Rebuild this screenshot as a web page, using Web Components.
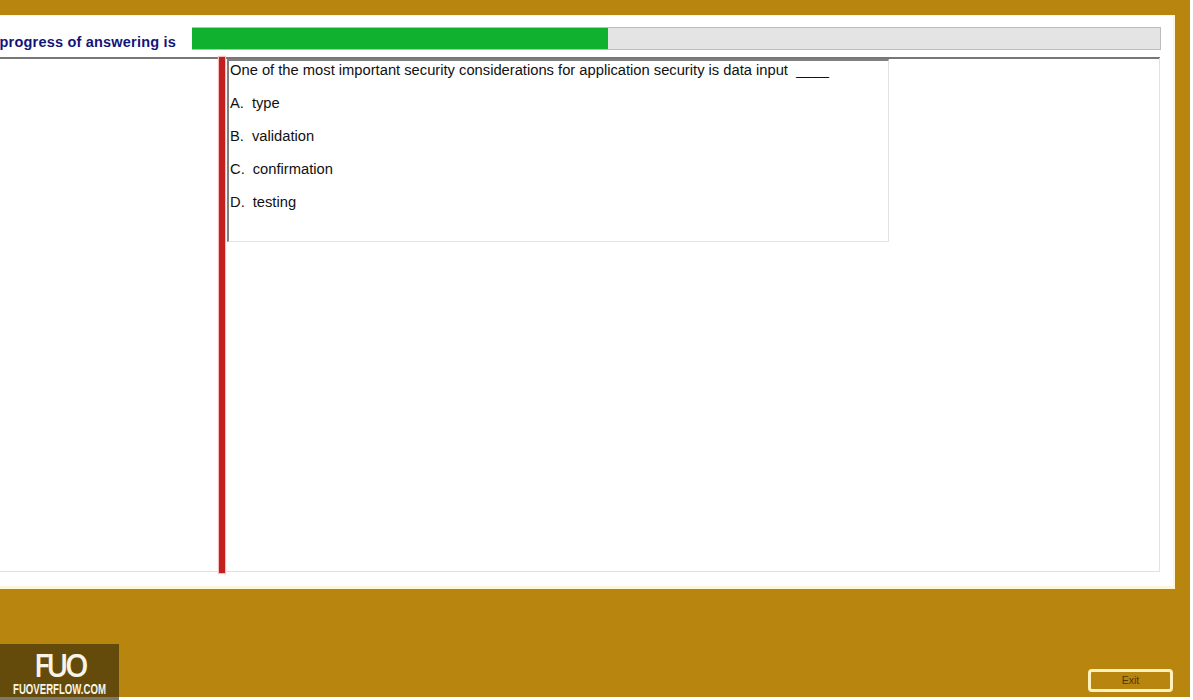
<!DOCTYPE html>
<html>
<head>
<meta charset="utf-8">
<title>Exam</title>
<style>
    html, body { margin: 0; height: 100%; background: #fff; overflow: hidden; }
    body { font-family: "Liberation Sans", Arial, sans-serif; }
</style>
</head>
<body>
<exam-screen>
    <exam-progress label="progress of answering is" value="43"></exam-progress>
    <exam-question>
        <span slot="stem">One of the most important security considerations for application security is data input  ____</span>
        <exam-option letter="A">type</exam-option>
        <exam-option letter="B">validation</exam-option>
        <exam-option letter="C">confirmation</exam-option>
        <exam-option letter="D">testing</exam-option>
    </exam-question>
    <exit-button slot="footer">Exit</exit-button>
</exam-screen>
<fuo-badge></fuo-badge>
<script>
"use strict";
class ExamScreen extends HTMLElement {
    constructor() {
        super();
        this.attachShadow({ mode: 'open' });
    }
    connectedCallback() {
        this.shadowRoot.innerHTML = `
            <style>
                :host {
                    display: flex;
                    flex-direction: column;
                    width: 1190px;
                    height: 697px;
                    padding-top: 15px;
                    box-sizing: border-box;
                    background: #b8860f;
                }
                .panel {
                    width: 1175px;
                    height: 574px;
                    box-sizing: border-box;
                    padding-right: 13px;
                    background: #fff;
                    border-right: 2px solid #fff6d8;
                    border-bottom: 3px solid #fff6d8;
                    border-top: 1px solid #fff6d8;
                    display: flex;
                    flex-direction: column;
                }
                .footer {
                    flex: 1;
                    display: flex;
                    justify-content: flex-end;
                    align-items: flex-end;
                    padding: 0 17px 5px 0;
                }
            </style>
            <div class="panel"><slot></slot></div>
            <div class="footer"><slot name="footer"></slot></div>
        `;
    }
}
class ExamProgress extends HTMLElement {
    constructor() {
        super();
        this.attachShadow({ mode: 'open' });
    }
    connectedCallback() {
        const value = this.getAttribute('value');
        this.shadowRoot.innerHTML = `
            <style>
                :host {
                    display: flex;
                    height: 43px;
                    box-sizing: border-box;
                    padding-top: 11px;
                    border-bottom: 2px solid #777;
                }
                .label {
                    width: 176px;
                    margin-right: 16px;
                    overflow: hidden;
                    white-space: nowrap;
                    display: flex;
                    justify-content: flex-end;
                    margin-top: 7px;
                    height: 17px;
                    line-height: 17px;
                    font-size: 14.5px;
                    font-weight: bold;
                    letter-spacing: 0.2px;
                    color: #14147a;
                }
                .track {
                    flex: 1;
                    height: 23px;
                    margin-right: -1px;
                    box-sizing: border-box;
                    background: #e4e4e4;
                    border: 1px solid #bcbcbc;
                    border-left: 0;
                }
                .fill {
                    width: ${value}%;
                    height: 100%;
                    background: #0fb12e;
                }
            </style>
            <div class="label">${this.getAttribute('label')}</div>
            <div class="track"><div class="fill"></div></div>
        `;
    }
}
class ExamQuestion extends HTMLElement {
    constructor() {
        super();
        this.attachShadow({ mode: 'open' });
    }
    connectedCallback() {
        this.shadowRoot.innerHTML = `
            <style>
                :host {
                    display: flex;
                    height: 514px;
                    padding-left: 219px;
                    box-sizing: border-box;
                    border-right: 1px solid #e2e2e2;
                    border-bottom: 1px solid #e2e2e2;
                    margin-top: -1px;
                }
                .bar {
                    width: 6px;
                    margin: -1px 0 -2px;
                    background: #c21f1f;
                    box-shadow: 0 0 1px 1px #f6c0c0;
                }
                .card {
                    width: 662px;
                    height: 183px;
                    margin: 1px 0 0 2px;
                    box-sizing: border-box;
                    border-top: 2px solid #808080;
                    border-left: 2px solid #808080;
                    border-right: 1px solid #e2e2e2;
                    border-bottom: 1px solid #e2e2e2;
                    padding-left: 1px;
                    font-size: 14.72px;
                    color: #111;
                }
                .stem {
                    line-height: 18px;
                    margin-bottom: 8px;
                    white-space: pre;
                }
            </style>
            <div class="bar"></div>
            <div class="card">
                <div class="stem"><slot name="stem"></slot></div>
                <slot></slot>
            </div>
        `;
    }
}
class ExamOption extends HTMLElement {
    constructor() {
        super();
        this.attachShadow({ mode: 'open' });
    }
    connectedCallback() {
        this.shadowRoot.innerHTML = `
            <style>
                :host { display: flex; height: 33px; line-height: 33px; }
                .letter { margin-right: 8px; }
            </style>
            <span class="letter">${this.getAttribute('letter')}.</span>
            <slot></slot>
        `;
    }
}
class ExitButton extends HTMLElement {
    constructor() {
        super();
        this.attachShadow({ mode: 'open' });
    }
    connectedCallback() {
        this.shadowRoot.innerHTML = `
            <style>
                :host { display: block; }
                button {
                    width: 85px;
                    height: 23px;
                    padding: 0 0 2px;
                    background: transparent;
                    border: 3px solid #fff1bd;
                    border-radius: 4px;
                    font-family: "Liberation Sans", Arial, sans-serif;
                    font-size: 10.5px;
                    color: #4f3608;
                }
            </style>
            <button><slot></slot></button>
        `;
    }
}
class FuoBadge extends HTMLElement {
    constructor() {
        super();
        this.attachShadow({ mode: 'open' });
    }
    connectedCallback() {
        this.shadowRoot.innerHTML = `
            <style>
                :host {
                    position: absolute;
                    left: 0;
                    top: 644px;
                    width: 119px;
                    height: 56px;
                    background: rgba(48, 38, 10, 0.62);
                }
                svg { display: block; fill: #f8f4e6; }
                .mark { font: 600 33px "Open Sans", sans-serif; letter-spacing: -4px; }
                .site { font: bold 14.5px "Liberation Sans", Arial, sans-serif; }
            </style>
            <svg width="119" height="56" viewBox="0 0 119 56">
                <text class="mark" x="34" y="33" textLength="51" lengthAdjust="spacingAndGlyphs">FUO</text>
                <text class="site" x="13" y="50" textLength="93" lengthAdjust="spacingAndGlyphs">FUOVERFLOW.COM</text>
            </svg>
        `;
    }
}
customElements.define('exam-screen', ExamScreen);
customElements.define('exam-progress', ExamProgress);
customElements.define('exam-question', ExamQuestion);
customElements.define('exam-option', ExamOption);
customElements.define('exit-button', ExitButton);
customElements.define('fuo-badge', FuoBadge);
</script>
</body>
</html>
